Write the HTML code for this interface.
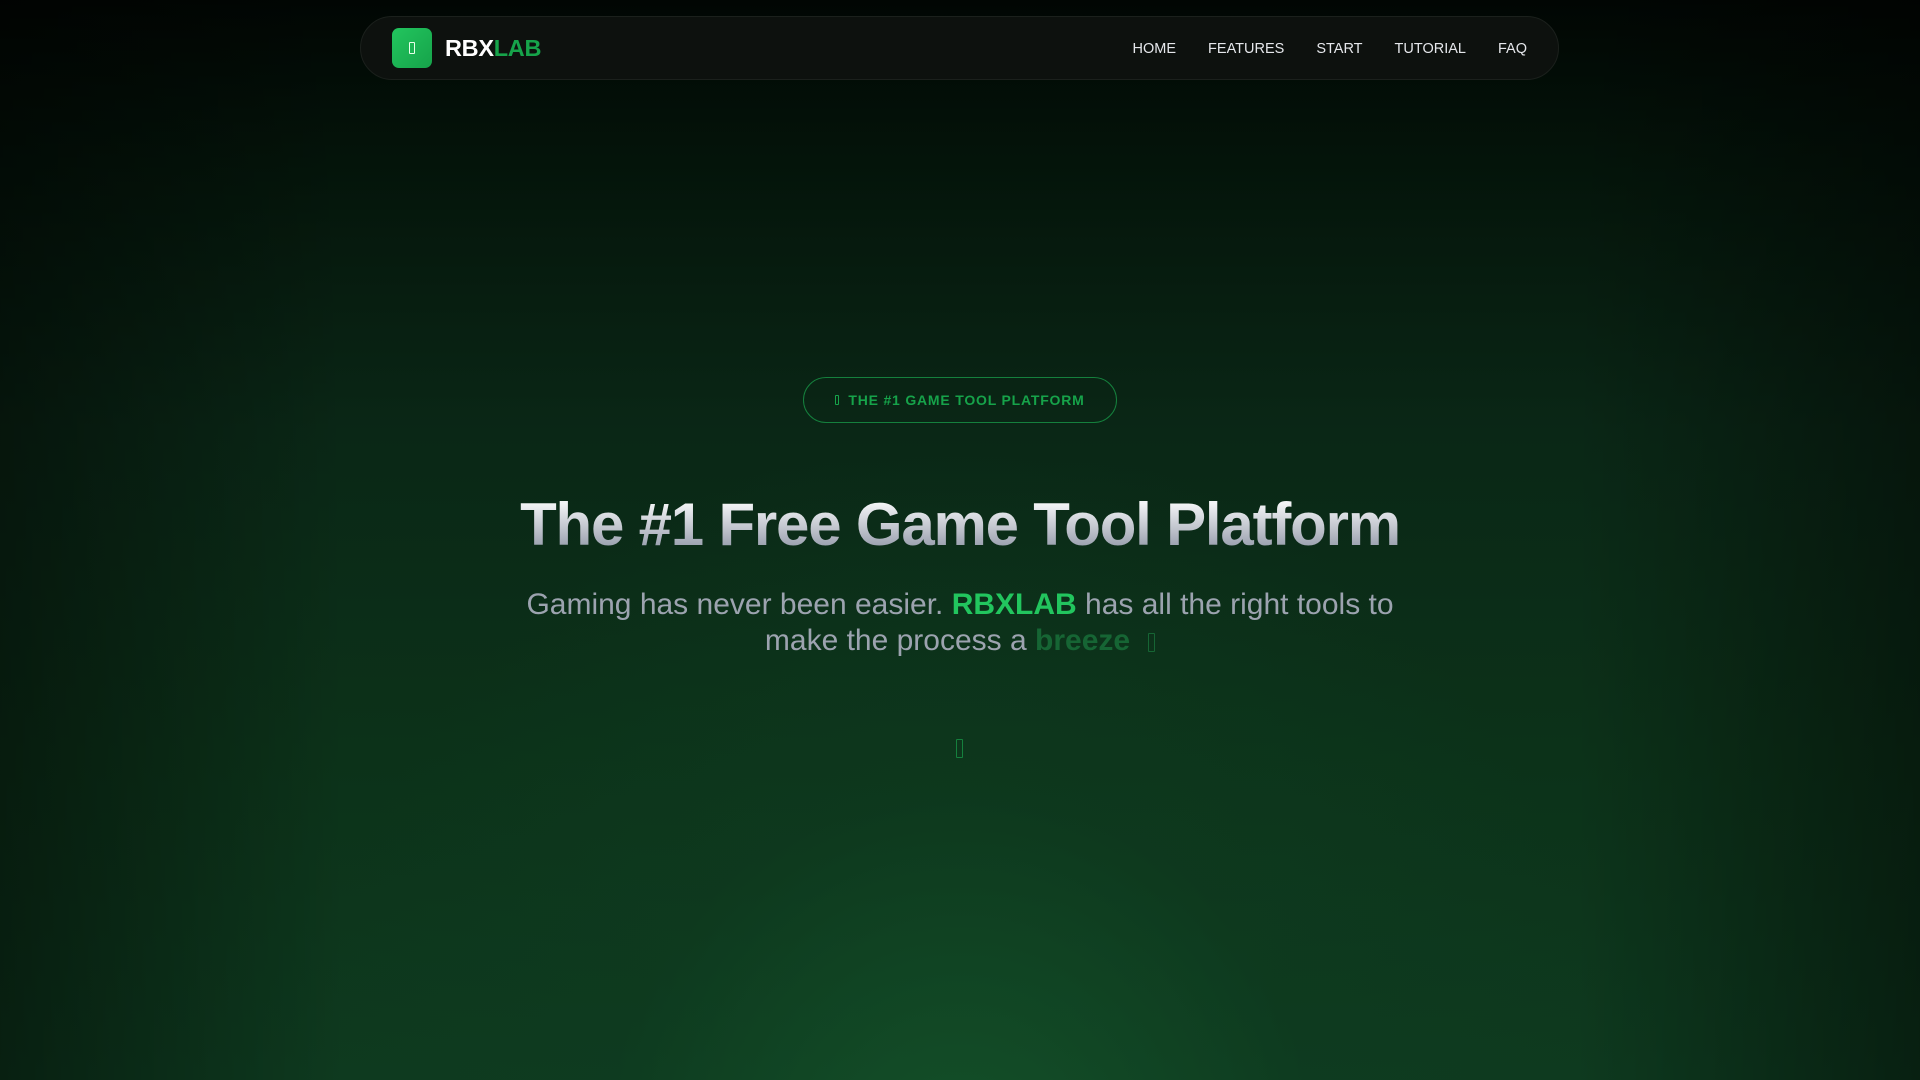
<!DOCTYPE html>
<html><head><meta charset="utf-8"><style>
*{margin:0;padding:0;box-sizing:border-box}
html,body{width:1920px;height:1080px;overflow:hidden}
body{font-family:"Liberation Sans",Arial,sans-serif;position:relative;
background:
radial-gradient(ellipse 900px 1000px at 50% 110%, rgba(22,90,45,0.75) 0%, rgba(14,60,32,0.5) 40%, rgba(0,0,0,0) 75%),
linear-gradient(180deg,#010603 0%,#04140a 15%,#0a2716 40%,#0c3219 70%,#0e3a1f 100%);}
body:after{content:"";position:absolute;inset:0;background:linear-gradient(90deg,rgba(0,0,0,0.45) 0%,rgba(0,0,0,0) 18%,rgba(0,0,0,0) 82%,rgba(0,0,0,0.45) 100%);pointer-events:none}
.nav{position:absolute;left:360px;top:16px;width:1199px;height:64px;border-radius:32px;background:#0d110e;border:1px solid #1b201c;z-index:2}
.logo{position:absolute;left:31px;top:11px;width:40px;height:40px;border-radius:7px;background:linear-gradient(135deg,#22c55e,#16a34a)}
.box{display:inline-block;border:1px solid currentColor;border-radius:1px}
.logo .box{position:absolute;left:17px;top:14px;width:6px;height:12px;color:#e6ffe9}
.brand{position:absolute;left:84px;top:16px;font-size:23.5px;font-weight:bold;letter-spacing:-0.3px;color:#fff;line-height:30px}
.brand span{color:#16a34a}
.links{position:absolute;right:0;top:0;height:64px;display:flex;align-items:center;font-size:14.5px;color:#e5e7eb}
.links a{margin-right:32px}
.links a:last-child{margin-right:31px}
.badge{position:absolute;left:803px;top:377px;width:314px;height:46px;border:1px solid #15803d;border-radius:23px;color:#16a34a;font-size:14px;font-weight:bold;letter-spacing:0.8px;display:flex;align-items:center;justify-content:center;z-index:2;padding-top:0}
.badge .box{width:4px;height:10px;margin-right:9px}
h1{position:absolute;left:0;width:1920px;top:489px;text-align:center;font-size:60px;letter-spacing:-1.2px;font-weight:bold;line-height:72px;z-index:2;
background:linear-gradient(180deg,#f3f4f6 20%,#8c93a3 90%);-webkit-background-clip:text;background-clip:text;color:transparent}
.sub{position:absolute;left:0;width:1920px;top:587px;text-align:center;font-size:30px;line-height:36px;color:#9ca3af;z-index:2}
.sub b.g{color:#22c55e}
.sub b.d{color:#166534}
.sub .box{width:7px;height:19px;color:#166534;vertical-align:-2px;margin-left:18px}
.chev{position:absolute;left:956px;top:739px;width:7px;height:19px;color:#15803d;z-index:2}
</style></head><body>
<div class="nav">
<div class="logo"><span class="box"></span></div>
<div class="brand">RBX<span>LAB</span></div>
<div class="links"><a>HOME</a><a>FEATURES</a><a>START</a><a>TUTORIAL</a><a>FAQ</a></div>
</div>
<div class="badge"><span class="box"></span>THE #1 GAME TOOL PLATFORM</div>
<h1>The #1 Free Game Tool Platform</h1>
<div class="sub">Gaming has never been easier. <b class="g">RBXLAB</b> has all the right tools to<br>make the process a <b class="d">breeze</b><span class="box"></span></div>
<span class="box chev"></span>
</body></html>
